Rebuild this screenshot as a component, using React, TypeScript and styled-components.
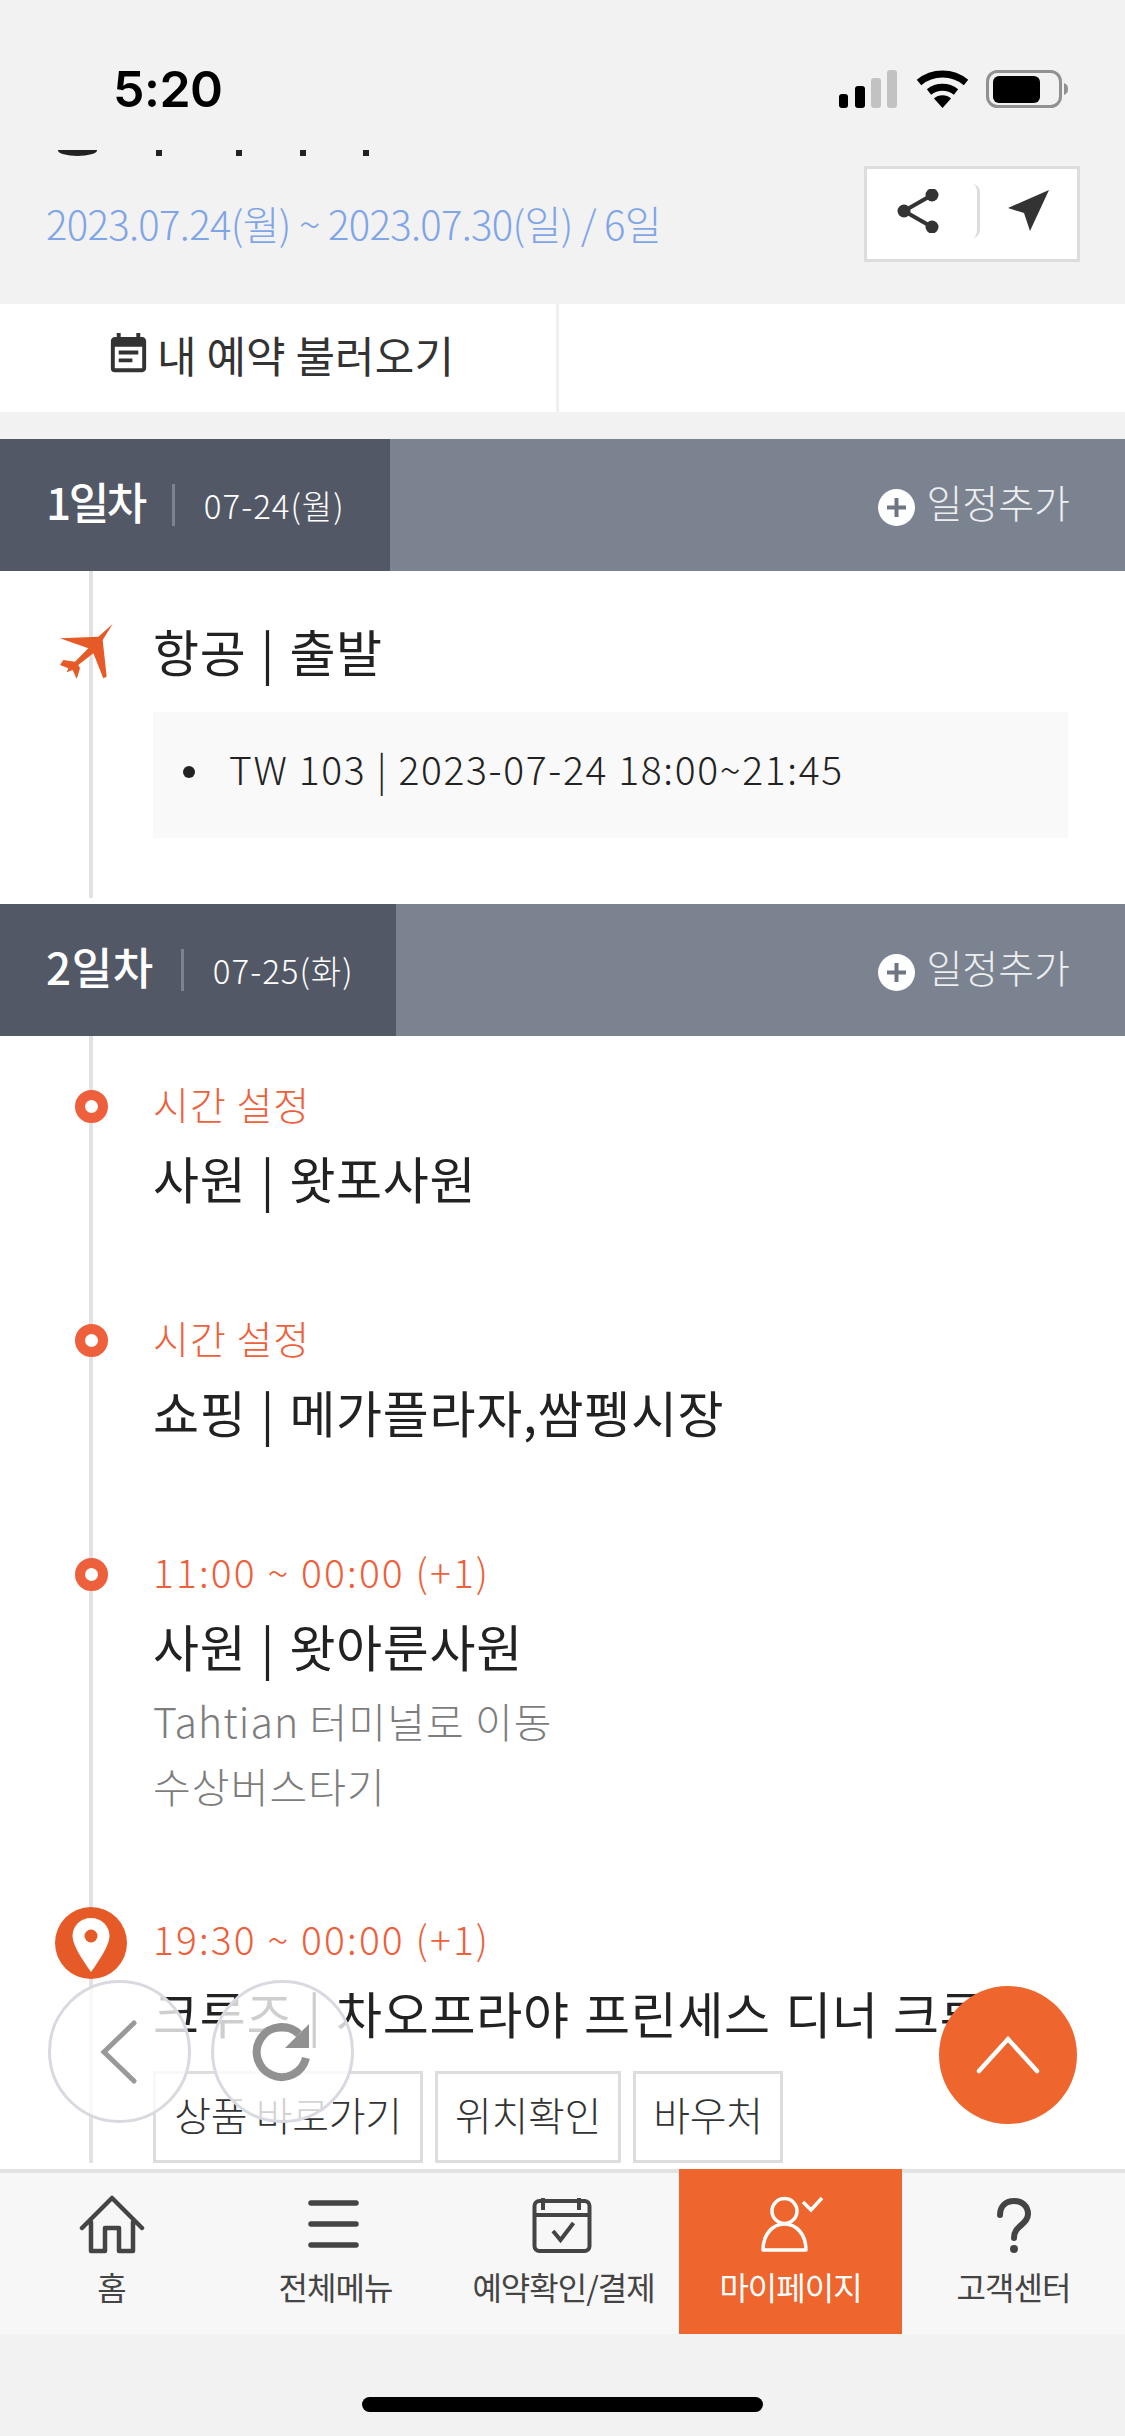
import React from 'react';
import styled, { createGlobalStyle } from 'styled-components';
import { MdEventNote } from 'react-icons/md';

const GlobalStyle = createGlobalStyle`
    html, body {
        margin: 0;
        padding: 0;
        background: #f2f2f2;
    }
    * {
        box-sizing: border-box;
    }
    body {
        font-family: "Noto Sans CJK KR", "Noto Sans", sans-serif;
        font-weight: 300;
    }
`;

const Page = styled.div`
    position: relative;
    width: 1125px;
    height: 2436px;
    overflow: hidden;
    display: flex;
    flex-direction: column;
    background: #f2f2f2;
`;

/* status bar */
const StatusBar = styled.div`
    height: 150px;
    flex: none;
    display: flex;
    justify-content: space-between;
    padding: 70px 56px 0 113px;
`;

const Clock = styled.span`
    font-family: Inter, sans-serif;
    font-weight: 600;
    font-size: 50px;
    line-height: 38px;
    letter-spacing: -0.5px;
    color: #000;
`;

const StatusIcons = styled.svg`
    width: 230px;
    height: 38px;
`;

/* scrolled content */
const Scroller = styled.div`
    height: 2019px;
    flex: none;
    overflow: hidden;
    background: #fff;
`;

const TripHead = styled.div`
    height: 154px;
    background: #f2f2f2;
    padding-right: 45px;
`;

const TitleStubs = styled.div`
    height: 6px;
    margin-bottom: 10px;
    display: flex;
`;

const StubRound = styled.i`
    width: 39px;
    height: 6px;
    margin: 0 59px 0 58px;
    background: #222;
    border-radius: 0 0 20px 20px / 0 0 6px 6px;
`;

const StubDot = styled.i<{ $gap: number }>`
    width: 6px;
    height: 6px;
    margin-right: ${p => p.$gap}px;
    background: #222;
`;

const TripRow = styled.div`
    display: flex;
    justify-content: space-between;
    align-items: center;
    padding-left: 46px;
`;

const TripDate = styled.span`
    margin-top: 18px;
    font-size: 40px;
    line-height: 60px;
    letter-spacing: -0.65px;
    color: #7fa5e8;
`;

const ShareBox = styled.div`
    width: 216px;
    height: 96px;
    border: 3px solid #ddd;
    background: #fff;
    display: flex;
    align-items: center;
    padding: 0 0 6px 21px;
`;

const ShareCell = styled.div`
    width: 92px;
    height: 54px;
    border-right: 3px solid #ddd;
    border-radius: 8px;
    display: flex;
    align-items: center;
    justify-content: center;
    padding-right: 27px;
`;

const SendCell = styled.div`
    flex: 1;
    display: flex;
    justify-content: center;
`;

const LoadRow = styled.div`
    height: 108px;
    background: #fff;
    display: flex;
`;

const LoadCell = styled.div`
    width: 559px;
    border-right: 3px solid #f0f0f0;
    display: flex;
    align-items: center;
    padding: 0 0 8px 105px;
    font-size: 43px;
    font-weight: 400;
    letter-spacing: 0.1px;
    color: #333;

    svg {
        margin-right: 5px;
    }
`;

const Spacer = styled.div`
    height: 27px;
    background: #f2f2f2;
`;

const DayHead = styled.div`
    height: 132px;
    display: flex;
    background: #7a838f;
`;

const DayTag = styled.div<{ $width: number }>`
    width: ${p => p.$width}px;
    background: #525865;
    display: flex;
    align-items: center;
    padding-left: 46px;
    color: #fff;
`;

const DayNo = styled.span<{ $spacing: number }>`
    margin-top: -8px;
    font-size: 44px;
    font-weight: 500;
    letter-spacing: ${p => p.$spacing}px;
`;

const DayDate = styled.span`
    margin-left: 27px;
    padding-left: 29px;
    border-left: 3px solid #7a838f;
    font-size: 33px;
    line-height: 42px;
    letter-spacing: 1px;
`;

const AddPlan = styled.div`
    margin-left: auto;
    display: flex;
    align-items: center;
    gap: 11px;
    padding-right: 55px;
    font-size: 39px;
    letter-spacing: 0;
    color: #eceef0;
`;

const AddLabel = styled.span`
    margin-top: -8px;
`;

const PlusDot = styled.svg`
    width: 37px;
    height: 37px;
    margin-top: 4px;
`;

const Timeline = styled.div<{ $top: number; $bottom: number }>`
    margin: 0 0 6px 89px;
    border-left: 4px solid #e2e2e2;
    padding: ${p => p.$top}px 57px ${p => p.$bottom}px 60px;
`;

const Entry = styled.div<{ $last?: boolean }>`
    position: relative;
    display: flow-root;
    padding-bottom: ${p => (p.$last ? 0 : 101)}px;
`;

const Dot = styled.i`
    position: absolute;
    left: -78.5px;
    top: 9px;
    width: 33px;
    height: 33px;
    border: 10px solid #ee5f3b;
    border-radius: 50%;
    background: #fff;
`;

const MarkerIcon = styled.svg<{ $left: number; $top: number; $w: number; $h: number }>`
    position: absolute;
    left: ${p => p.$left}px;
    top: ${p => p.$top}px;
    width: ${p => p.$w}px;
    height: ${p => p.$h}px;
`;

const TimeText = styled.div<{ $digits?: boolean }>`
    margin: -3px 0 16px;
    font-size: 39px;
    line-height: 50px;
    letter-spacing: ${p => (p.$digits ? 2.1 : 1)}px;
    color: #ee5f3b;
`;

const PlaceTitle = styled.div`
    margin: -2px 0 2px;
    font-size: 50px;
    font-weight: 400;
    line-height: 70px;
    letter-spacing: 0.7px;
    word-spacing: 2.5px;
    color: #222;
    white-space: nowrap;
`;

const Note = styled.div`
    margin: 8px 0 -3px;
    font-size: 41px;
    line-height: 65px;
    letter-spacing: 1.1px;
    color: #7d7d7d;
`;

const FlightBox = styled.ul`
    margin: 27px 0 0;
    padding: 31px 0 45px 76px;
    background: #f9f9f9;
    list-style: none;
    font-size: 39px;
    line-height: 50px;
    letter-spacing: 1.66px;
    color: #222;
`;

const FlightItem = styled.li`
    position: relative;

    &::before {
        content: "";
        position: absolute;
        left: -46px;
        top: 23px;
        width: 12px;
        height: 12px;
        border-radius: 50%;
        background: #222;
    }
`;

const LinkRow = styled.div`
    display: flex;
    gap: 12px;
    margin-top: 24px;
`;

const LinkBtn = styled.div<{ $width: number }>`
    width: ${p => p.$width}px;
    height: 92px;
    border: 3px solid #ddd;
    background: #fff;
    display: flex;
    align-items: center;
    justify-content: center;
    padding-bottom: 6px;
    font-size: 40px;
    letter-spacing: -0.3px;
    color: #333;
`;

/* floating buttons */
const RoundBtn = styled.div<{ $left: number }>`
    position: absolute;
    left: ${p => p.$left}px;
    top: 1980px;
    width: 143px;
    height: 143px;
    border: 3px solid #d9d9e2;
    border-radius: 50%;
    background: rgba(255, 255, 255, 0.78);
    display: flex;
    align-items: center;
    justify-content: center;
`;

const TopBtn = styled.div`
    position: absolute;
    left: 939px;
    top: 1986px;
    width: 138px;
    height: 138px;
    border-radius: 50%;
    background: #ee652d;
    display: flex;
    align-items: center;
    justify-content: center;
`;

/* bottom tabs */
const TabBar = styled.div`
    height: 165px;
    flex: none;
    display: grid;
    grid-template-columns: 223px 225px 231px 223px 223px;
    background: #f7f7f7;
    border-top: 4px solid #e2e2e2;
`;

const Tab = styled.div<{ $active?: boolean }>`
    margin-top: ${p => (p.$active ? -4 : 0)}px;
    padding-top: ${p => (p.$active ? 26 : 22)}px;
    display: flex;
    flex-direction: column;
    align-items: center;
    background: ${p => (p.$active ? '#ee652d' : 'transparent')};
    color: ${p => (p.$active ? '#fff' : '#444')};
    font-size: 32px;
    font-weight: 400;
    letter-spacing: -1px;

    svg {
        width: 70px;
        height: 60px;
        flex: none;
    }
`;

const TabLabel = styled.span`
    margin-top: 7px;
    line-height: 48px;
    white-space: nowrap;
`;

const HomeArea = styled.div`
    flex: 1;
    display: flex;
    justify-content: center;
    padding-top: 63px;
`;

const HomeBar = styled.div`
    width: 401px;
    height: 15px;
    border-radius: 8px;
    background: #000;
`;

const Plus = () => (
    <PlusDot viewBox="0 0 37 37">
        <circle cx="18.5" cy="18.5" r="18.5" fill="#fff" />
        <path d="M18.5 9v19M9 18.5h19" stroke="#6d7682" strokeWidth="4" />
    </PlusDot>
);

export default function App() {
    return (
        <Page>
            <GlobalStyle />
            <StatusBar>
                <Clock>5:20</Clock>
                <StatusIcons viewBox="0 0 230 38">
                    <rect x="0" y="24" width="9" height="14" rx="3" fill="#000" />
                    <rect x="16" y="16" width="10" height="22" rx="3" fill="#000" />
                    <rect x="32" y="8" width="10" height="30" rx="3" fill="#c2c2c2" />
                    <rect x="48" y="0" width="10" height="38" rx="3" fill="#c2c2c2" />
                    <path d="M80 12.5a37 37 0 0 1 47 0" fill="none" stroke="#000" strokeWidth="7" />
                    <path d="M90 22a22 22 0 0 1 27 0" fill="none" stroke="#000" strokeWidth="7" />
                    <path d="M95 28.5a13 13 0 0 1 17 0L103.500 38z" fill="#000" />
                    <rect x="148.500" y="1.500" width="73" height="35" rx="10" fill="none" stroke="#919191" strokeWidth="3" />
                    <rect x="154" y="6" width="47" height="27" rx="6" fill="#000" />
                    <path d="M225 13c3 1 4 3 4 6s-1 5-4 6z" fill="#919191" />
                </StatusIcons>
            </StatusBar>

            <Scroller>
                <TripHead>
                    <TitleStubs>
                        <StubRound />
                        <StubDot $gap={74} />
                        <StubDot $gap={58} />
                        <StubDot $gap={57} />
                        <StubDot $gap={0} />
                    </TitleStubs>
                    <TripRow>
                        <TripDate>2023.07.24(월) ~ 2023.07.30(일) / 6일</TripDate>
                        <ShareBox>
                            <ShareCell>
                                <svg width="44" height="44" viewBox="0 0 44 44">
                                    <path d="M35 6L7 22l28 16" fill="none" stroke="#333" strokeWidth="4" />
                                    <circle cx="35" cy="6" r="6.500" fill="#333" />
                                    <circle cx="7" cy="22" r="6.500" fill="#333" />
                                    <circle cx="35" cy="38" r="6.500" fill="#333" />
                                </svg>
                            </ShareCell>
                            <SendCell>
                                <svg width="42" height="42" viewBox="0 0 42 42">
                                    <path d="M41 0L0 18l16 5 6 18z" fill="#333" />
                                </svg>
                            </SendCell>
                        </ShareBox>
                    </TripRow>
                </TripHead>
                <LoadRow>
                    <LoadCell>
                        <MdEventNote size={47} />
                        내 예약 불러오기
                    </LoadCell>
                </LoadRow>
                <Spacer />

                <DayHead>
                    <DayTag $width={390}>
                        <DayNo $spacing={-2.4}>1일차</DayNo>
                        <DayDate>07-24(월)</DayDate>
                    </DayTag>
                    <AddPlan><Plus /><AddLabel>일정추가</AddLabel></AddPlan>
                </DayHead>
                <Timeline $top={46} $bottom={60}>
                    <Entry $last>
                        <MarkerIcon $left={-113} $top={-7} $w={100} $h={80} viewBox="0 0 300 240">
                            <path d="M218 42L175 80 60 85l85 30-40 40-35-5-10 15 25 10-5 12 18-7 12 27 10-32-5-10 45-35 30 75 10-5-12-110z" fill="#e55a26" />
                        </MarkerIcon>
                        <PlaceTitle>항공 | 출발</PlaceTitle>
                        <FlightBox>
                            <FlightItem>TW 103 | 2023-07-24 18:00~21:45</FlightItem>
                        </FlightBox>
                    </Entry>
                </Timeline>

                <DayHead>
                    <DayTag $width={396}>
                        <DayNo $spacing={0.6}>2일차</DayNo>
                        <DayDate>07-25(화)</DayDate>
                    </DayTag>
                    <AddPlan><Plus /><AddLabel>일정추가</AddLabel></AddPlan>
                </DayHead>
                <Timeline $top={45} $bottom={0}>
                    <Entry>
                        <Dot />
                        <TimeText>시간 설정</TimeText>
                        <PlaceTitle>사원 | 왓포사원</PlaceTitle>
                    </Entry>
                    <Entry>
                        <Dot />
                        <TimeText>시간 설정</TimeText>
                        <PlaceTitle>쇼핑 | 메가플라자,쌈펭시장</PlaceTitle>
                    </Entry>
                    <Entry>
                        <Dot />
                        <TimeText $digits>11:00 ~ 00:00 (+1)</TimeText>
                        <PlaceTitle>사원 | 왓아룬사원</PlaceTitle>
                        <Note>Tahtian 터미널로 이동<br />수상버스타기</Note>
                    </Entry>
                    <Entry $last>
                        <MarkerIcon $left={-98} $top={-9} $w={72} $h={72} viewBox="0 0 72 72">
                            <circle cx="36" cy="36" r="36" fill="#e55a26" />
                            <path d="M36 11c10.500 0 18.500 8 18.500 18 0 9-10 24-18.500 36C27.500 53 17.500 38 17.500 29c0-10 8-18 18.500-18z" fill="#fff" />
                            <circle cx="36" cy="29" r="6.500" fill="#e55a26" />
                        </MarkerIcon>
                        <TimeText $digits>19:30 ~ 00:00 (+1)</TimeText>
                        <PlaceTitle>크루즈 | 차오프라야 프린세스 디너 크루즈</PlaceTitle>
                        <LinkRow>
                            <LinkBtn $width={270}>상품 바로가기</LinkBtn>
                            <LinkBtn $width={186}>위치확인</LinkBtn>
                            <LinkBtn $width={150}>바우처</LinkBtn>
                        </LinkRow>
                    </Entry>
                </Timeline>
            </Scroller>

            <TabBar>
                <Tab>
                    <svg viewBox="0 0 70 60">
                        <path d="M5 33L35 3l30 30M14 27v29h14V33h14v23h14V27" fill="none" stroke="#444" strokeWidth="4.500" strokeLinecap="round" strokeLinejoin="round" />
                    </svg>
                    <TabLabel>홈</TabLabel>
                </Tab>
                <Tab>
                    <svg viewBox="0 0 70 60">
                        <path d="M10 8h45M10 29h45M10 50h45" fill="none" stroke="#444" strokeWidth="5.500" strokeLinecap="round" />
                    </svg>
                    <TabLabel>전체메뉴</TabLabel>
                </Tab>
                <Tab>
                    <svg viewBox="0 0 70 60">
                        <rect x="5.500" y="6" width="55" height="50" rx="5" fill="none" stroke="#444" strokeWidth="4" />
                        <path d="M5.500 20h55M14 3v12M50 3v12M24 36l7.500 9 13-17" fill="none" stroke="#444" strokeWidth="4" />
                    </svg>
                    <TabLabel>예약확인/결제</TabLabel>
                </Tab>
                <Tab $active>
                    <svg viewBox="0 0 70 60">
                        <circle cx="28.500" cy="16" r="12.500" fill="none" stroke="#fff" strokeWidth="3.500" />
                        <path d="M7 55c0-16 10-26 21.500-26S50 39 50 55z" fill="none" stroke="#fff" strokeWidth="3.500" strokeLinejoin="round" />
                        <path d="M47 7l8 8 11-12" fill="none" stroke="#fff" strokeWidth="3.500" />
                    </svg>
                    <TabLabel>마이페이지</TabLabel>
                </Tab>
                <Tab>
                    <svg viewBox="0 0 70 60">
                        <path d="M21 20c0-9 6-14 14-14s14 5 14 13c0 11-14 11-14 24" fill="none" stroke="#444" strokeWidth="6" strokeLinecap="round" />
                        <circle cx="35" cy="54" r="4" fill="#444" />
                    </svg>
                    <TabLabel>고객센터</TabLabel>
                </Tab>
            </TabBar>

            <HomeArea>
                <HomeBar />
            </HomeArea>

            <RoundBtn $left={48}>
                <svg width="40" height="66" viewBox="0 0 40 66">
                    <path d="M34 4L4 33l30 29" fill="none" stroke="#999" strokeWidth="5" strokeLinecap="round" />
                </svg>
            </RoundBtn>
            <RoundBtn $left={211}>
                <svg width="64" height="64" viewBox="0 0 64 64">
                    <path d="M55 38a25 25 0 1 1-7-24" fill="none" stroke="#919191" strokeWidth="8" />
                    <path d="M58 4v24H34z" fill="#919191" />
                </svg>
            </RoundBtn>
            <TopBtn>
                <svg width="64" height="40" viewBox="0 0 64 40">
                    <path d="M3 36L32 4l29 32" fill="none" stroke="#fff" strokeWidth="4.500" strokeLinecap="round" />
                </svg>
            </TopBtn>
        </Page>
    );
}
